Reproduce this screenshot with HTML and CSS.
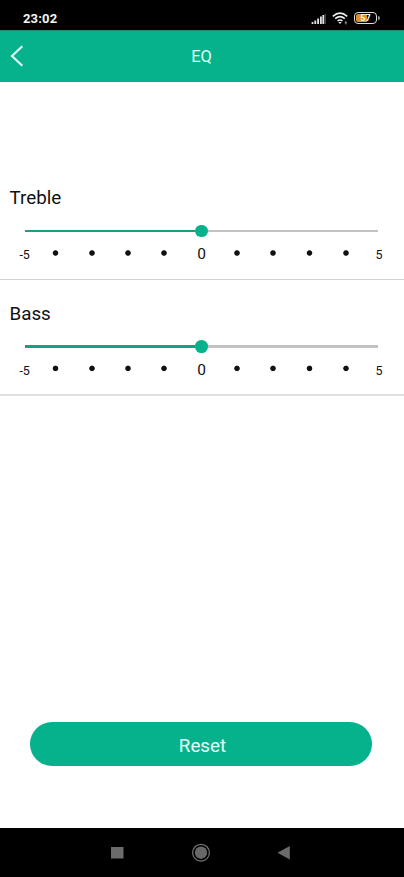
FILE: index.html
```html
<!DOCTYPE html>
<html lang="en">
<head>
<meta charset="utf-8">
<title>EQ</title>
<link rel="stylesheet" href="styles.css">
</head>
<body>
<div class="screen">
  <div class="status">
    <span class="time">23:02</span>
    <div class="indicators">
      <svg class="signal" width="16" height="12" viewBox="0 0 16 12" stroke="#e4e4e4" stroke-width="1.8">
        <path d="M1.5 11V9M4.3 11V7.5M7.1 11V5.5M9.9 11V3.5M12.3 11V2"/><path d="M14.2 11V1" stroke="#666" stroke-width="1"/>
      </svg>
      <svg class="wifi" width="17" height="13" viewBox="0 0 17 13" fill="none" stroke="#eee" stroke-width="1.6">
        <path d="M.8 4.3Q8 -2 15.2 4.3M3.2 6.7Q8 2.6 12.8 6.7M5.5 9Q8 7 10.5 9"/>
        <path d="M6.3 10h3.4L8 12z" fill="#eee" stroke="none"/><path d="M13.8 9v3.5M12.6 10.8h2.5" stroke="#888" stroke-width="1"/>
      </svg>
      <div class="battery"><span>57</span></div>
      <i class="tip"></i>
    </div>
  </div>
  <header class="header">
    <svg class="back" width="14" height="22" viewBox="0 0 14 22" fill="none" stroke="#e6fff8" stroke-width="2.1"><path d="M12.3 1.2 2 11l10.3 9.8"/></svg>
    <h1>EQ</h1>
  </header>
  <main class="main">
    <section class="control">
      <h2>Treble</h2>
      <div class="slider"><div class="fill"></div><div class="thumb"></div></div>
      <div class="scale"><span class="end">-5</span><i></i><i></i><i></i><i></i><b>0</b><i></i><i></i><i></i><i></i><span class="end">5</span></div>
    </section>
    <section class="control bass">
      <h2>Bass</h2>
      <div class="slider"><div class="fill"></div><div class="thumb"></div></div>
      <div class="scale"><span class="end">-5</span><i></i><i></i><i></i><i></i><b>0</b><i></i><i></i><i></i><i></i><span class="end">5</span></div>
    </section>
    <button class="reset">Reset</button>
  </main>
  <nav class="nav">
    <svg width="404" height="49" viewBox="0 0 404 49">
      <rect x="111" y="19" width="12.5" height="11.5" fill="#6b6b6b"/>
      <circle cx="201" cy="24.7" r="8.4" fill="none" stroke="#757575" stroke-width="1.2"/>
      <circle cx="201" cy="24.7" r="6.2" fill="#686868"/>
      <path d="M277.5 24.8 289.8 18v13.5z" fill="#6b6b6b"/>
    </svg>
  </nav>
</div>
</body>
</html>
```
FILE: styles.css
```css
* { box-sizing: border-box; }
body { margin: 0; font-family: Roboto, sans-serif; background: #fff; }
.screen { width: 404px; height: 877px; display: flex; flex-direction: column; overflow: hidden; }
.status { height: 30px; background: #000; display: flex; justify-content: space-between; padding: 11px 24px 0 23px; }
.time { color: #f2f2f2; font-size: 13px; line-height: 16px; font-weight: 700; letter-spacing: .15px; }
.indicators { display: flex; align-items: flex-start; }
.signal { margin-top: 2px; }
.wifi { margin: 1px 0 0 5px; }
.battery { width: 23px; height: 12px; margin: 1px 0 0 5px; border: 1.5px solid #ddd; border-radius: 4px; padding: 1px; }
.battery span { display: block; height: 8px; border-radius: 2px; background: linear-gradient(90deg, #d9922e 56%, #000 56%); color: #fff; font-size: 9px; line-height: 8px; font-weight: 700; text-align: center; }
.tip { width: 2px; height: 4px; margin: 5px 0 0 1px; background: #999; border-radius: 0 2px 2px 0; }
.header { position: relative; height: 51.5px; background: #05b28c; display: flex; align-items: center; justify-content: center; border-top: 1px solid #168a70; }
.back { position: absolute; left: 10px; top: 14px; }
h1 { margin: 1px 1px 0 0; font-size: 16.5px; line-height: 20px; font-weight: 400; color: #e6fff8; }
.main { flex: 1; display: flex; flex-direction: column; padding-top: 82.5px; }
.control { height: 116px; padding-top: 22px; border-bottom: 1px solid #d2d2d2; }
h2 { margin: 0 0 0 9.5px; font-size: 18.8px; line-height: 24px; font-weight: 400; color: #111; }
.slider { position: relative; height: 2px; margin: 20px 26px 0 25px; background: #c2c2c2; }
.fill { width: 50%; height: 100%; background: #16a182; }
.thumb { position: absolute; left: 170px; top: -5.2px; width: 12.6px; height: 12.6px; border-radius: 50%; background: #05b28c; }
.scale { display: flex; align-items: flex-start; height: 22px; margin: 11px 10px 0 12px; color: #111; }
.bass { border-bottom: 2px solid #e0e0e0; }
.bass .slider { height: 3px; margin-top: 19px; }
.bass .thumb { top: -4.6px; }
.bass .scale { margin-top: 10px; }
.end { width: 25.3px; font-size: 12.5px; line-height: 16px; padding-top: 4px; text-align: center; }
.end:last-child { width: 30px; }
.scale i, .scale b { width: 36.3px; height: 22px; }
.scale i { background: radial-gradient(circle at 50% 10px, #111 2.3px, transparent 3.2px); }
.bass .scale i { background: radial-gradient(circle at 50% 10.4px, #111 2.3px, transparent 3.2px); }
.scale b { font-size: 15.5px; line-height: 22px; font-weight: 400; padding-left: 2px; text-align: center; }
.bass .end { padding-top: 5px; }
.bass .scale b { line-height: 24px; }
.reset { width: 342px; height: 44px; margin: auto 0 62px 30px; padding: 4px 0 0 3px; border: 0; border-radius: 22px; background: #05b28c; color: #e6fff8; font: 18.8px/24px Roboto, sans-serif; }
.nav { height: 49px; background: #000; }
.nav svg { display: block; }
```
